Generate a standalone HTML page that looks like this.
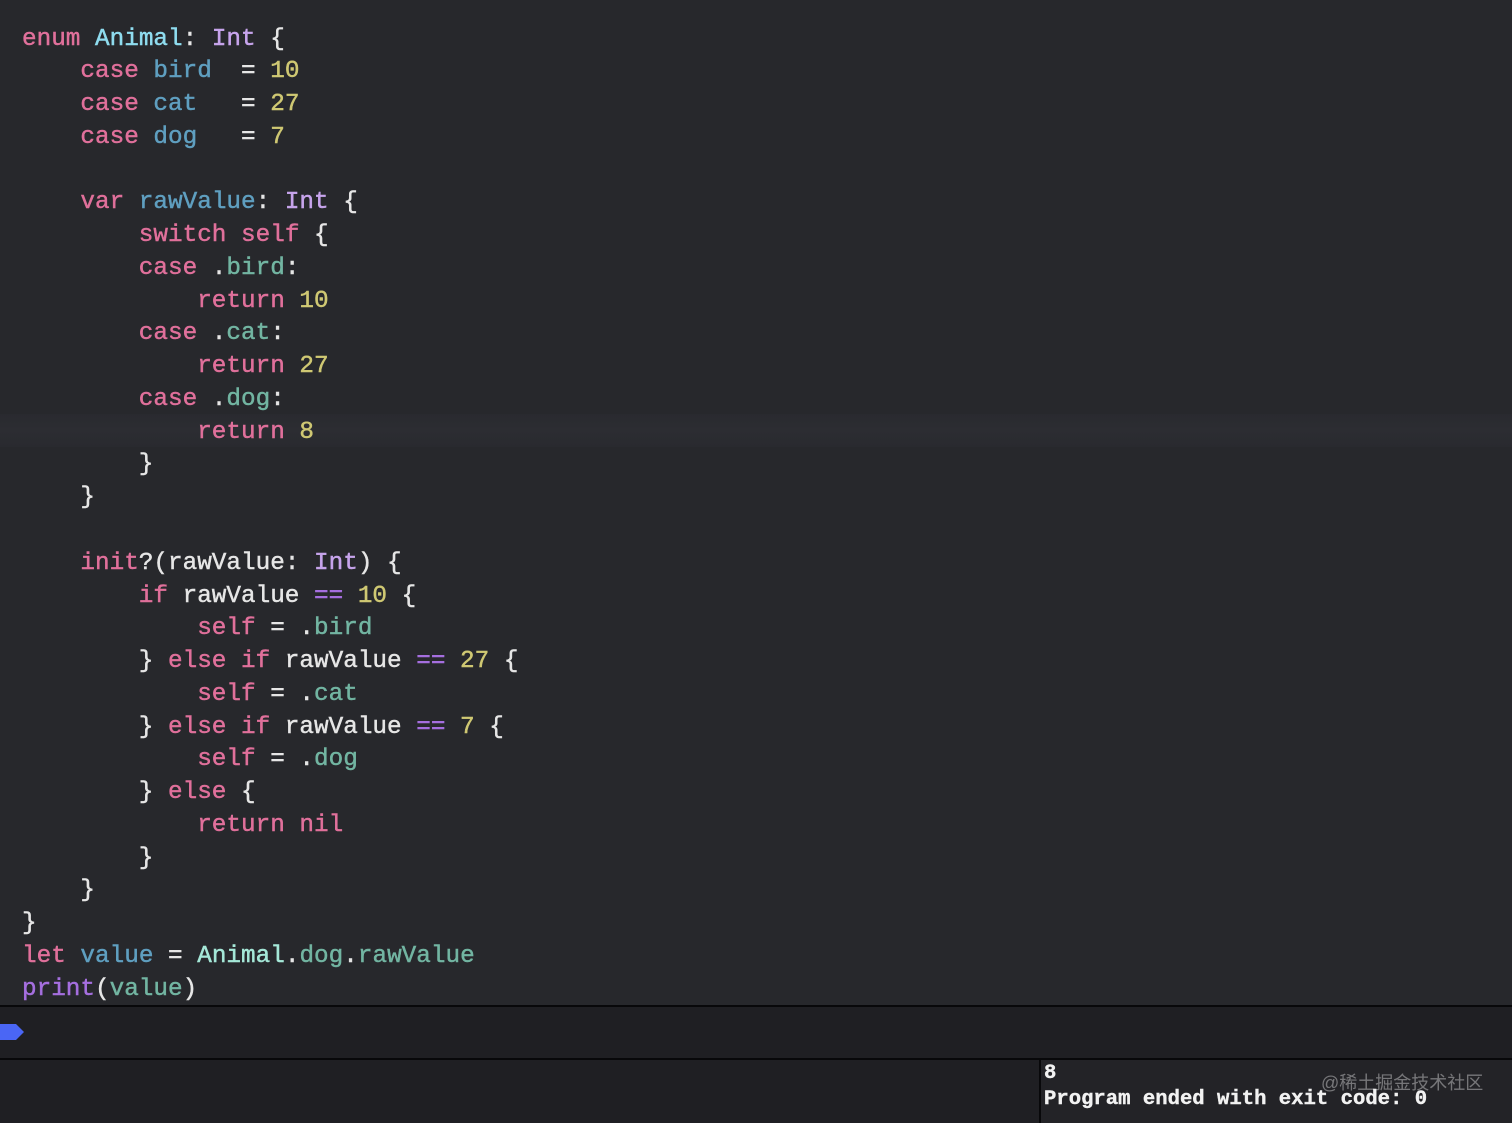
<!DOCTYPE html>
<html><head><meta charset="utf-8"><style>
html,body{margin:0;padding:0;width:1512px;height:1123px;overflow:hidden;background:#27282c}
.abs{position:absolute}
pre{margin:0;font-family:"Liberation Mono","DejaVu Sans Mono",monospace}
#code{left:22px;top:23.5px;font-size:24.33px;line-height:32.76px;color:#e6e6e6;filter:blur(.35px);-webkit-text-stroke:.45px}
.k{color:#e0709b}.t{color:#8fdcef}.s{color:#c7a4ec}.v{color:#5f9fc0}.n{color:#cfc873}.m{color:#72b5a2}.o{color:#a56fdf}.a{color:#a5e8d8}
</style></head><body>
<div class="abs" style="left:0;top:414px;width:1512px;height:33px;background:linear-gradient(#292a2f,#2c2d32 50%,#292a2f)"></div>
<pre id="code" class="abs"><span class="k">enum</span> <span class="t">Animal</span>: <span class="s">Int</span> {
    <span class="k">case</span> <span class="v">bird</span>  = <span class="n">10</span>
    <span class="k">case</span> <span class="v">cat</span>   = <span class="n">27</span>
    <span class="k">case</span> <span class="v">dog</span>   = <span class="n">7</span>

    <span class="k">var</span> <span class="v">rawValue</span>: <span class="s">Int</span> {
        <span class="k">switch</span> <span class="k">self</span> {
        <span class="k">case</span> .<span class="m">bird</span>:
            <span class="k">return</span> <span class="n">10</span>
        <span class="k">case</span> .<span class="m">cat</span>:
            <span class="k">return</span> <span class="n">27</span>
        <span class="k">case</span> .<span class="m">dog</span>:
            <span class="k">return</span> <span class="n">8</span>
        }
    }

    <span class="k">init</span>?(rawValue: <span class="s">Int</span>) {
        <span class="k">if</span> rawValue <span class="o">==</span> <span class="n">10</span> {
            <span class="k">self</span> = .<span class="m">bird</span>
        } <span class="k">else</span> <span class="k">if</span> rawValue <span class="o">==</span> <span class="n">27</span> {
            <span class="k">self</span> = .<span class="m">cat</span>
        } <span class="k">else</span> <span class="k">if</span> rawValue <span class="o">==</span> <span class="n">7</span> {
            <span class="k">self</span> = .<span class="m">dog</span>
        } <span class="k">else</span> {
            <span class="k">return</span> <span class="k">nil</span>
        }
    }
}
<span class="k">let</span> <span class="v">value</span> = <span class="a">Animal</span>.<span class="m">dog</span>.<span class="m">rawValue</span>
<span class="o">print</span>(<span class="m">value</span>)</pre>
<div class="abs" style="left:0;top:1005px;width:1512px;height:118px;background:#1f1f23"></div>
<div class="abs" style="left:0;top:1005px;width:1512px;height:2px;background:#08080a"></div>
<div class="abs" style="left:0;top:1058px;width:1512px;height:2px;background:#08080a"></div>
<div class="abs" style="left:1039px;top:1059px;width:2px;height:64px;background:#08080a"></div>
<div class="abs" style="left:1041px;top:1060px;width:471px;height:63px;background:#232327"></div>
<svg class="abs" style="left:0;top:1023px" width="24" height="18"><path d="M0 1H16L24 9L16 17H0Z" fill="#4a66f5"/></svg>
<pre class="abs" style="left:1044px;top:1061px;font-size:20.6px;line-height:26px;font-weight:bold;color:#f2f2f2;-webkit-text-stroke:.4px">8
Program ended with exit code: 0</pre>
<div class="abs" style="left:1321px;top:1071px;font-family:'Liberation Sans','Noto Sans CJK SC',sans-serif;font-size:18px;line-height:24px;color:rgba(255,255,255,.38);white-space:nowrap">@稀土掘金技术社区</div>
</body></html>
